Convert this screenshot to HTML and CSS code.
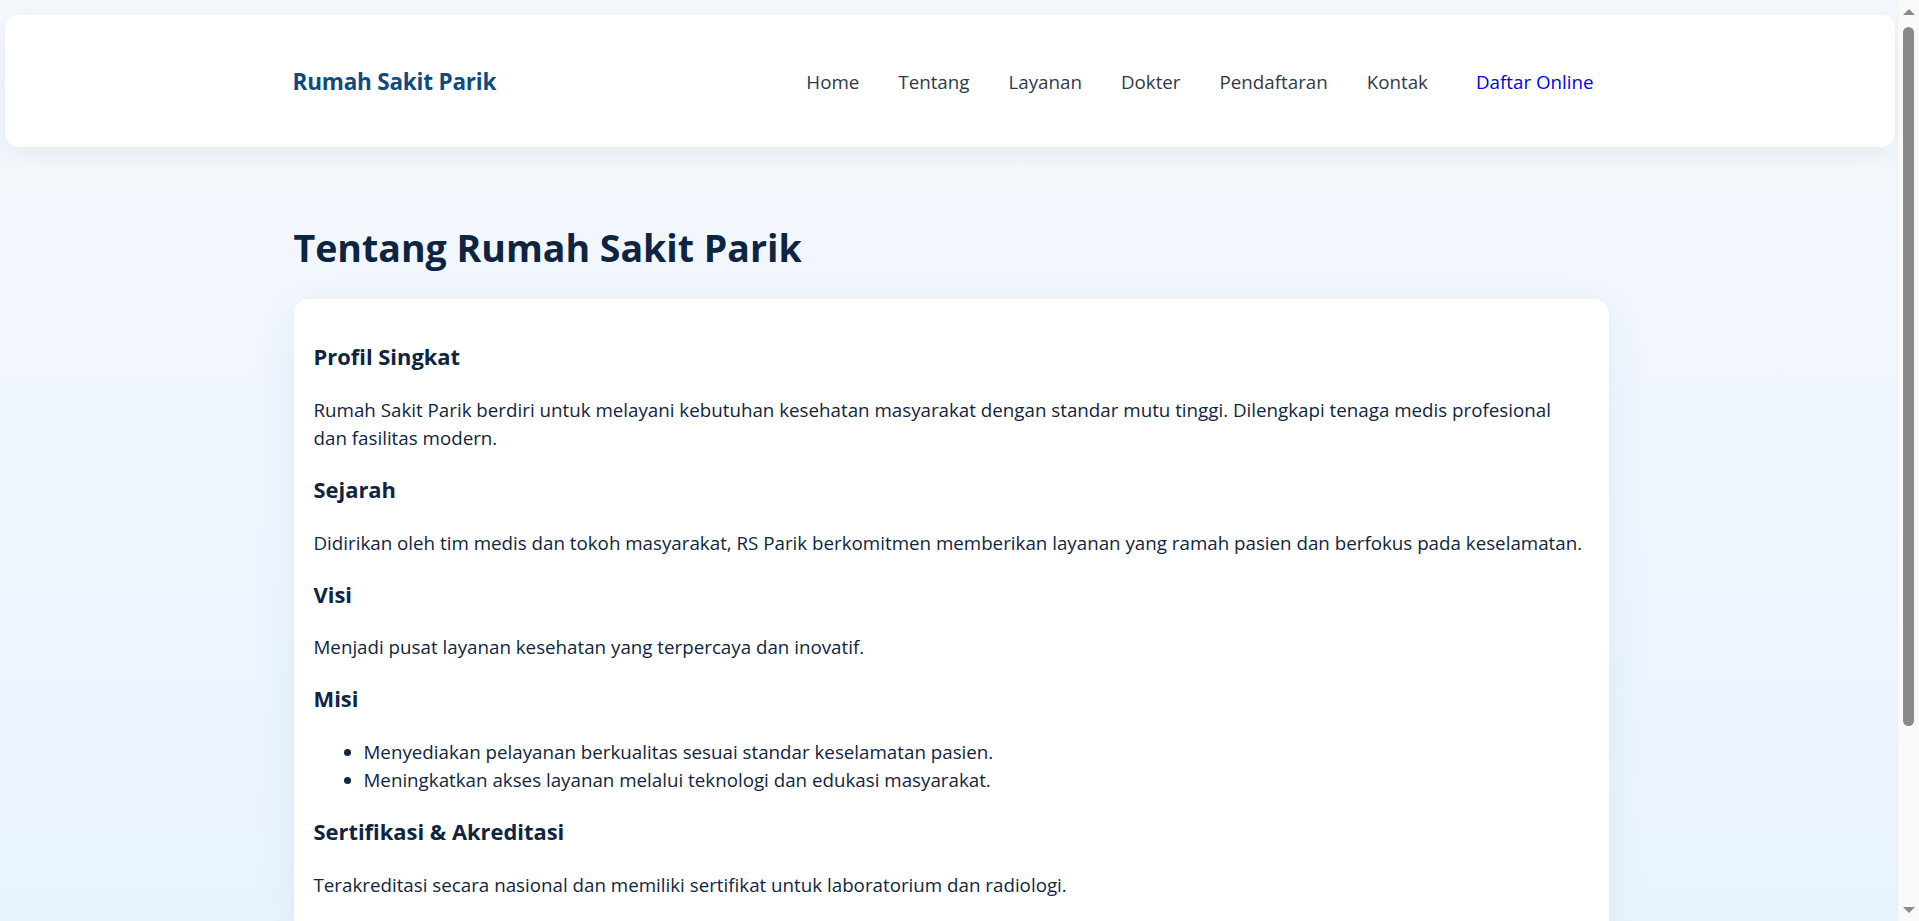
FILE: index.html
```html
<!DOCTYPE html>
<html lang="id">
<head>
<meta charset="utf-8">
<title>Tentang - Rumah Sakit Parik</title>
<link rel="stylesheet" href="styles.css">
</head>
<body>
<div class="window">
  <div class="viewport">
    <header class="site-header">
      <div class="container header-inner">
        <a class="logo" href="#">Rumah Sakit Parik</a>
        <nav class="nav">
          <a href="#">Home</a>
          <a href="#">Tentang</a>
          <a href="#">Layanan</a>
          <a href="#">Dokter</a>
          <a href="#">Pendaftaran</a>
          <a href="#">Kontak</a>
          <a class="nav-cta" href="#">Daftar Online</a>
        </nav>
      </div>
    </header>
    <main class="container main">
      <h1 class="page-title">Tentang Rumah Sakit Parik</h1>
      <section class="card">
        <h3>Profil Singkat</h3>
        <p>Rumah Sakit Parik berdiri untuk melayani kebutuhan kesehatan masyarakat dengan standar mutu tinggi. Dilengkapi tenaga medis profesional dan fasilitas modern.</p>
        <h3>Sejarah</h3>
        <p>Didirikan oleh tim medis dan tokoh masyarakat, RS Parik berkomitmen memberikan layanan yang ramah pasien dan berfokus pada keselamatan.</p>
        <h3>Visi</h3>
        <p>Menjadi pusat layanan kesehatan yang terpercaya dan inovatif.</p>
        <h3>Misi</h3>
        <ul>
          <li>Menyediakan pelayanan berkualitas sesuai standar keselamatan pasien.</li>
          <li>Meningkatkan akses layanan melalui teknologi dan edukasi masyarakat.</li>
        </ul>
        <h3>Sertifikasi &amp; Akreditasi</h3>
        <p>Terakreditasi secara nasional dan memiliki sertifikat untuk laboratorium dan radiologi.</p>
      </section>
    </main>
  </div>
  <div class="scrollbar">
    <span class="arrow arrow-up"></span>
    <span class="thumb"></span>
    <span class="arrow arrow-down"></span>
  </div>
</div>
</body>
</html>
```

FILE: styles.css
```css
* { box-sizing: border-box; }

html, body {
  margin: 0;
  height: 100%;
  overflow: hidden;
}

body {
  font-family: "Segoe UI", "Open Sans", "Noto Sans", sans-serif;
  font-size: 18.75px;
  line-height: 1.5;
  color: #10253f;
  background: #f5f8fc;
}

.window {
  display: flex;
  height: 921px;
}

.viewport {
  flex: 1;
  height: 921px;
  overflow: hidden;
  background: linear-gradient(180deg, #f5f8fc 0%, #f0f6fd 45%, #e9f3fe 100%);
  padding: 15px 0 0 5px;
}

.container {
  width: 1375px;
  margin: 0 auto;
  padding: 0 30px;
}

/* Header */
.site-header {
  margin-right: 2px;
  height: 132px;
  background: #fff;
  border-radius: 14px;
  box-shadow: 0 6px 22px rgba(20, 50, 100, 0.07);
  display: flex;
  align-items: center;
}

.header-inner {
  display: flex;
  align-items: center;
  justify-content: space-between;
  padding-top: 2px;
}

.logo {
  font-weight: 700;
  font-size: 22.5px;
  color: #0f4a80;
  text-decoration: none;
  letter-spacing: -0.2px;
}

.nav {
  display: flex;
  align-items: center;
  gap: 39px;
  font-size: 18.75px;
}

.nav a {
  color: #2e3948;
  text-decoration: none;
}

.nav .nav-cta {
  color: #0000ee;
  padding: 0 14px 0 9px;
}

/* Main */
.main {
  padding-top: 78px;
}

.page-title {
  font-size: 37.5px;
  line-height: 1.2;
  font-weight: 700;
  color: #0d2541;
  margin: 0 0 29px;
}

.card {
  background: #fff;
  border-radius: 15px;
  padding: 20px 20px;
  box-shadow: 0 12px 40px rgba(40, 100, 180, 0.08);
}

.card h3 {
  font-size: 21.9px;
  font-weight: 700;
  margin: 21.9px 0;
  color: #0d2541;
}

.card p {
  margin: 18.75px 0;
}

.card ul {
  margin: 18.75px 0;
  padding-left: 50px;
}

/* Fake browser scrollbar */
.scrollbar {
  width: 22px;
  height: 921px;
  background: #f9f9f9;
  border-left: 1px solid #eeeeee;
  display: flex;
  flex-direction: column;
  align-items: center;
  padding: 9px 0 8px;
}

.thumb {
  width: 11px;
  height: 699px;
  margin-top: 12px;
  border-radius: 6px;
  background: #8a8a8a;
}

.arrow {
  width: 0;
  height: 0;
  border-left: 6px solid transparent;
  border-right: 6px solid transparent;
}

.arrow-up {
  border-bottom: 6px solid #8a8a8a;
}

.arrow-down {
  margin-top: auto;
  border-top: 6px solid #8a8a8a;
}
```
